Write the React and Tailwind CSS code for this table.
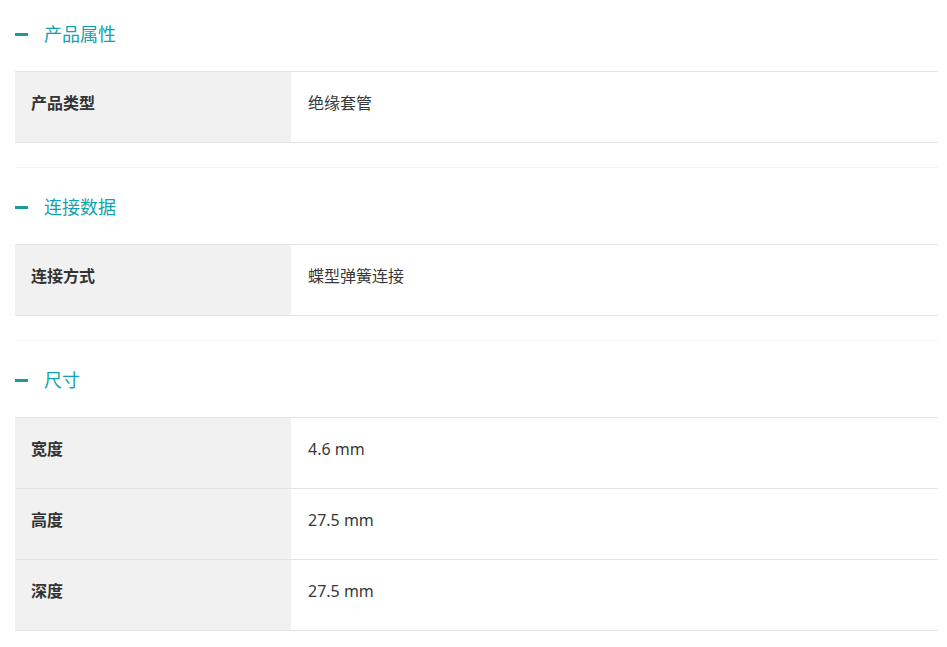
import React from 'react';

const sections = [
  {
    title: '产品属性',
    rows: [{ label: '产品类型', value: '绝缘套管' }],
  },
  {
    title: '连接数据',
    rows: [{ label: '连接方式', value: '蝶型弹簧连接' }],
  },
  {
    title: '尺寸',
    rows: [
      { label: '宽度', value: '4.6 mm' },
      { label: '高度', value: '27.5 mm' },
      { label: '深度', value: '27.5 mm' },
    ],
  },
];

function Section({ title, rows, first, last }) {
  return (
    <section className={first ? 'pt-5' : 'pt-[25px] border-t border-[#f3f3f3]'}>
      {/* heading */}
      <div className="flex items-center h-[28px]">
        <span className="block w-[13px] h-[3px] bg-[#1a9c9e]" />
        <h2 className="ml-[16px] text-[18px] leading-[28px] font-normal text-[#12a2ad]">{title}</h2>
      </div>

      {/* spec table */}
      <div className={`mt-[23px] border-t border-[#e3e3e6] ${last ? '' : 'mb-6'}`}>
        {rows.map((row) => (
          <div key={row.label} className="flex border-b border-[#e3e3e6] h-[71px]">
            <div className="w-[276px] shrink-0 bg-[#f1f1f2] flex items-center pl-4 pb-[9px] text-[16px] font-bold text-[#333]">
              {row.label}
            </div>
            <div className="flex-1 flex items-center pl-[17px] pb-[9px] text-[16px] text-[#383838]">
              {row.value}
            </div>
          </div>
        ))}
      </div>
    </section>
  );
}

export default function App() {
  return (
    <div
      className="bg-white min-h-screen pl-[15px] pr-[9px]"
      style={{ fontFamily: '"Noto Sans", "Noto Sans CJK SC", sans-serif' }}
    >
      {sections.map((s, i) => (
        <Section key={s.title} {...s} first={i === 0} last={i === sections.length - 1} />
      ))}
    </div>
  );
}
